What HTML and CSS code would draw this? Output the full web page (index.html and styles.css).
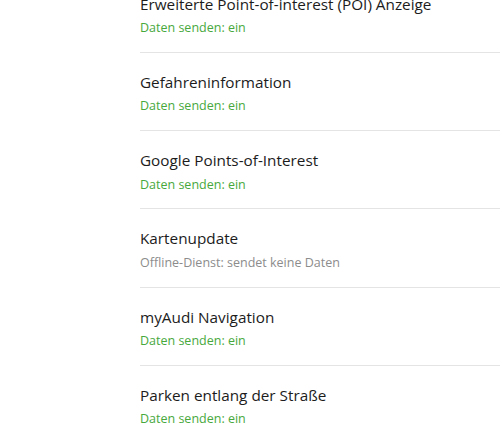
FILE: index.html
```html
<!DOCTYPE html>
<html lang="de">
<head>
<meta charset="utf-8">
<link rel="stylesheet" href="styles.css">
</head>
<body>
<ul class="list">
  <li class="item"><div class="title">Erweiterte Point-of-interest (POI) Anzeige</div><div class="sub on">Daten senden: ein</div></li>
  <li class="item"><div class="title">Gefahreninformation</div><div class="sub on">Daten senden: ein</div></li>
  <li class="item"><div class="title">Google Points-of-Interest</div><div class="sub on">Daten senden: ein</div></li>
  <li class="item"><div class="title">Kartenupdate</div><div class="sub off">Offline-Dienst: sendet keine Daten</div></li>
  <li class="item"><div class="title">myAudi Navigation</div><div class="sub on">Daten senden: ein</div></li>
  <li class="item"><div class="title">Parken entlang der Straße</div><div class="sub on">Daten senden: ein</div></li>
</ul>
</body>
</html>
```
FILE: styles.css
```css
html, body {
  margin: 0;
  padding: 0;
  background: #fff;
  overflow: hidden;
}
body {
  font-family: "Open Sans", "Noto Sans", sans-serif;
  color: #1c1c1c;
}
.list {
  list-style: none;
  margin: -25.5px 0 0 0;
  padding: 0 0 0 140px;
}
.item {
  height: 77.25px;
  box-sizing: content-box;
  border-bottom: 1px solid #e4e4e4;
  display: flex;
  flex-direction: column;
  justify-content: flex-start;
}
.title {
  font-size: 15.3px;
  line-height: 20px;
  margin-top: 19px;
  white-space: nowrap;
}
.sub {
  font-size: 12.5px;
  line-height: 16px;
  margin-top: 6.5px;
  white-space: nowrap;
}
.on { color: #47a83d; }
.off { color: #8c8c8c; }
```
